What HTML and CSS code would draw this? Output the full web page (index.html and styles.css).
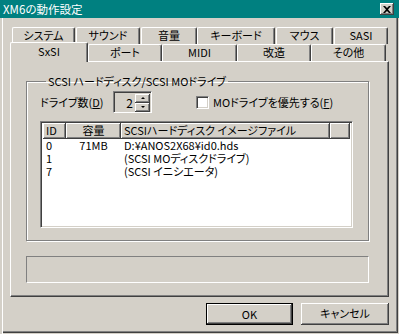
FILE: index.html
```html
<!DOCTYPE html>
<html lang="ja">
<head>
  <meta charset="UTF-8">
  <title>XM6の動作設定</title>
  <link rel="stylesheet" href="styles.css">
</head>
<body>
  <div class="window">
    <div class="titlebar">
      <span class="title-text">XM6の動作設定</span>
      <span class="close-btn">
        <svg width="8" height="7" viewBox="0 0 8 7"><path d="M0 0h2l2 2 2-2h2L5 3.5 8 7H6L4 5 2 7H0l3-3.5z" fill="#000"/></svg>
      </span>
    </div>

    <div class="frame">
      <div class="tabs">
        <div class="tab-row row-back">
          <div class="tab">システム</div>
          <div class="tab">サウンド</div>
          <div class="tab">音量</div>
          <div class="tab">キーボード</div>
          <div class="tab">マウス</div>
          <div class="tab">SASI</div>
        </div>
        <div class="tab-row row-front">
          <div class="tab selected">SxSI</div>
          <div class="tab">ポート</div>
          <div class="tab">MIDI</div>
          <div class="tab">改造</div>
          <div class="tab">その他</div>
        </div>

        <div class="panel">
          <fieldset class="group">
            <legend>SCSI ハードディスク/SCSI MOドライブ</legend>

            <div class="drive-row">
              <span class="label drive-label">ドライブ数(<u>D</u>)</span>
              <div class="spin">
                <span class="spin-value">2</span>
                <div class="spin-btns">
                  <div class="spin-btn"><span class="arrow up"></span></div>
                  <div class="spin-btn"><span class="arrow down"></span></div>
                </div>
              </div>
              <span class="check"></span>
              <span class="label">MOドライブを優先する(<u>F</u>)</span>
            </div>

            <div class="listview">
              <div class="lv-header">
                <div class="hd c-id">ID</div>
                <div class="hd c-size center">容量</div>
                <div class="hd c-file">SCSIハードディスク イメージファイル</div>
                <div class="hd c-rest"></div>
              </div>
              <div class="lv-row">
                <div class="c-id">0</div>
                <div class="c-size center">71MB</div>
                <div class="c-file">D:¥ANOS2X68¥id0.hds</div>
              </div>
              <div class="lv-row">
                <div class="c-id">1</div>
                <div class="c-size center"></div>
                <div class="c-file">(SCSI MOディスクドライブ)</div>
              </div>
              <div class="lv-row">
                <div class="c-id">7</div>
                <div class="c-size center"></div>
                <div class="c-file">(SCSI イニシエータ)</div>
              </div>
            </div>
          </fieldset>

          <div class="status"></div>
        </div>
      </div>

      <div class="buttons">
        <div class="btn default">OK</div>
        <div class="btn">キャンセル</div>
      </div>
    </div>
  </div>
</body>
</html>
```

FILE: styles.css
```css
html, body {
  margin: 0;
  padding: 0;
}

body {
  width: 399px;
  height: 334px;
  overflow: hidden;
  background: #d4d0c8;
  font-family: "Noto Sans CJK JP", "Noto Sans", sans-serif;
  font-size: 11px;
  font-feature-settings: "palt";
  color: #000;
}

.window {
  width: 399px;
  height: 334px;
  display: flex;
  flex-direction: column;
}

/* タイトルバー */
.titlebar {
  height: 18px;
  background: #008080;
  color: #fff;
  display: flex;
  align-items: center;
  justify-content: space-between;
  padding: 0 3px 0 3px;
  box-sizing: border-box;
}

.title-text {
  line-height: 14px;
  font-size: 11.5px;
}

.close-btn {
  width: 14px;
  height: 12px;
  margin-right: 2px;
  background: #d4d0c8;
  box-shadow: inset -1px -1px #404040, inset 1px 1px #fff, inset -2px -2px #808080;
  display: flex;
  align-items: center;
  justify-content: center;
}

.frame {
  flex: 1;
  box-sizing: border-box;
  padding: 9px 10px 0 10px;
  box-shadow:
    inset 2px 0 #d4d0c8, inset 3px 0 #fff,
    inset -1px -1px #d4d0c8, inset -2px -2px #404040, inset -3px -3px #808080;
}

/* タブ */
.tabs {
  width: 379px;
}

.tab-row {
  display: flex;
  height: 17px;
  align-items: flex-end;
}

.row-back {
  padding-left: 2px;
}

.tab {
  box-sizing: border-box;
  height: 17px;
  border-left: 1px solid #fff;
  border-top: 1px solid #fff;
  border-right: 1px solid #404040;
  border-radius: 2px 2px 0 0;
  box-shadow: inset -1px 0 #808080;
  text-align: center;
  line-height: 15px;
  background: #d4d0c8;
  white-space: nowrap;
}

.row-back .tab:nth-child(1) { width: 63px; }
.row-back .tab:nth-child(2) { width: 64px; margin-left: 1px; }
.row-back .tab:nth-child(3) { width: 56px; margin-left: 1px; }
.row-back .tab:nth-child(4) { width: 78px; }
.row-back .tab:nth-child(5) { width: 57px; margin-left: 1px; }
.row-back .tab:nth-child(6) { width: 54px; margin-left: 1px; }

.row-front .tab { width: 74px; }
.row-front .tab:nth-child(3) { width: 75px; }
.row-front .tab:nth-child(5) { width: 75px; }

.row-front .tab.selected {
  width: 78px;
  height: 20px;
  margin-bottom: -1px;
  line-height: 17px;
  position: relative;
  z-index: 1;
}

/* タブの中身 */
.panel {
  box-sizing: border-box;
  height: 236px;
  border-left: 1px solid #fff;
  border-top: 1px solid #fff;
  border-right: 1px solid #404040;
  border-bottom: 1px solid #404040;
  box-shadow: inset -1px -1px #808080;
  padding: 12px 0 0 15px;
}

.group {
  margin: 0;
  padding: 0 0 12px 13px;
  width: 343px;
  box-sizing: border-box;
  border: 1px solid #808080;
  box-shadow: 1px 1px #fff, inset 1px 1px #fff;
}

.group legend {
  margin-left: 6px;
  padding: 0 2px;
  line-height: 14px;
  white-space: nowrap;
}

.drive-row {
  display: flex;
  align-items: center;
  height: 22px;
  margin-top: 3px;
}

.label {
  line-height: 14px;
  white-space: nowrap;
}

.drive-label {
  width: 64px;
}

.spin {
  margin-left: 9px;
  width: 39px;
  height: 22px;
  box-sizing: border-box;
  border-top: 1px solid #808080;
  border-left: 1px solid #808080;
  border-right: 1px solid #fff;
  border-bottom: 1px solid #fff;
  box-shadow: inset 1px 1px #404040;
  display: flex;
  align-items: center;
  justify-content: flex-end;
  padding: 2px 1px 1px 2px;
}

.spin-value {
  line-height: 14px;
  margin-right: 2px;
  font-size: 12px;
}

.spin-btns {
  display: flex;
  flex-direction: column;
  width: 15px;
  height: 18px;
}

.spin-btn {
  flex: 1;
  background: #d4d0c8;
  box-shadow: inset -1px -1px #404040, inset 1px 1px #fff, inset -2px -2px #808080;
  display: flex;
  align-items: center;
  justify-content: center;
}

.arrow {
  width: 0;
  height: 0;
  border-left: 2px solid transparent;
  border-right: 2px solid transparent;
}

.arrow.up { border-bottom: 2px solid #000; }
.arrow.down { border-top: 2px solid #000; }

.check {
  width: 13px;
  height: 13px;
  box-sizing: border-box;
  margin-left: 44px;
  margin-right: 4px;
  background: #fff;
  border-top: 1px solid #808080;
  border-left: 1px solid #808080;
  border-right: 1px solid #fff;
  border-bottom: 1px solid #fff;
  box-shadow: inset 1px 1px #404040, inset -1px -1px #d4d0c8;
}

/* リストビュー */
.listview {
  margin-top: 8px;
  width: 313px;
  height: 107px;
  box-sizing: border-box;
  background: #fff;
  border-top: 1px solid #808080;
  border-left: 1px solid #808080;
  border-right: 1px solid #fff;
  border-bottom: 1px solid #fff;
  box-shadow: inset 1px 1px #404040, inset -1px -1px #d4d0c8;
  padding: 1px 2px 2px 2px;
}

.lv-header {
  display: flex;
  height: 16px;
}

.hd {
  box-sizing: border-box;
  height: 16px;
  background: #d4d0c8;
  box-shadow: inset -1px -1px #404040, inset 1px 1px #fff, inset -2px -2px #808080;
  line-height: 15px;
  white-space: nowrap;
  overflow: hidden;
}

.c-id { width: 23px; padding-left: 3px; box-sizing: border-box; }
.c-size { width: 55px; }
.c-file { width: 209px; padding-left: 3px; box-sizing: border-box; white-space: nowrap; }
.c-rest { flex: 1; }
.center { text-align: center; }

.lv-row {
  display: flex;
  height: 13px;
  line-height: 13px;
}

.status {
  margin-top: 15px;
  width: 343px;
  height: 27px;
  box-sizing: border-box;
  border-top: 1px solid #808080;
  border-left: 1px solid #808080;
  border-right: 1px solid #fff;
  border-bottom: 1px solid #fff;
}

/* ボタン */
.buttons {
  display: flex;
  justify-content: flex-end;
  gap: 8px;
  margin-top: 6px;
}

.btn {
  width: 87px;
  height: 22px;
  box-sizing: border-box;
  background: #d4d0c8;
  box-shadow: inset -1px -1px #404040, inset 1px 1px #fff, inset -2px -2px #808080;
  text-align: center;
  line-height: 20px;
}

.btn.default {
  border: 1px solid #000;
}

.btn + .btn {
  width: 88px;
}
```
